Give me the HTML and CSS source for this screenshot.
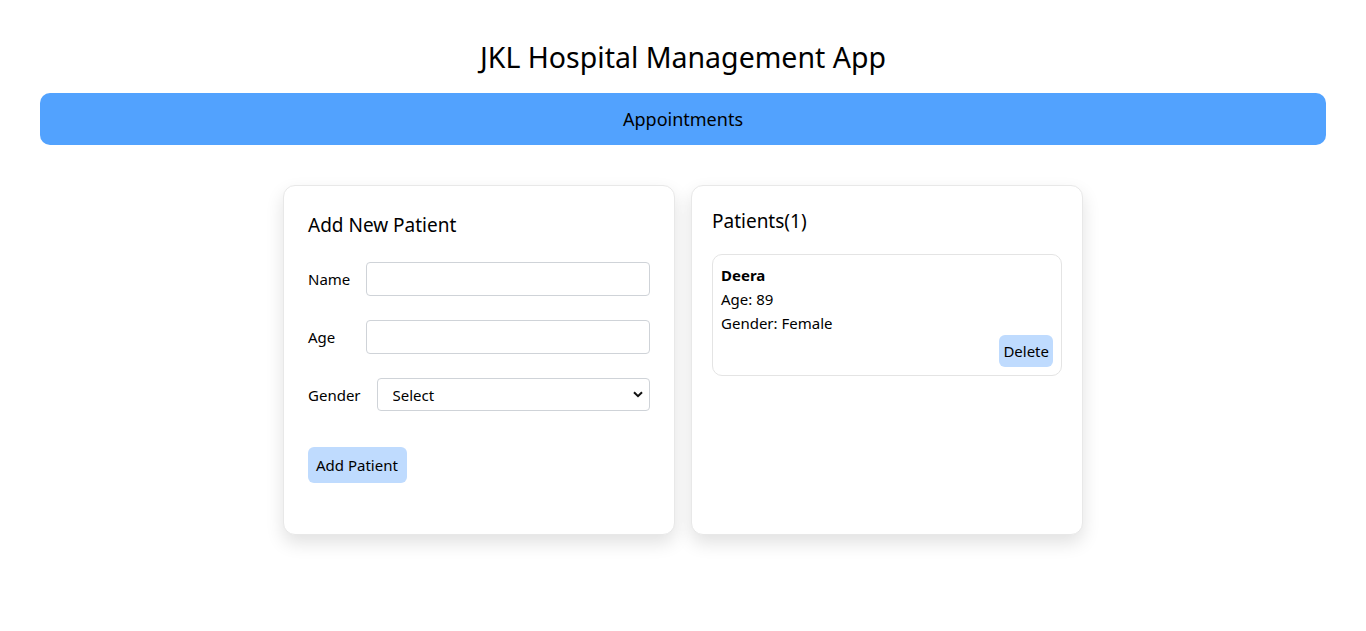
FILE: index.html
```html
<!DOCTYPE html>
<html lang="en">
<head>
<meta charset="utf-8">
<title>JKL Hospital Management App</title>
<link rel="stylesheet" href="styles.css">
</head>
<body>
<div class="app">
  <h1 class="title">JKL Hospital Management App</h1>
  <nav class="nav">Appointments</nav>
  <main class="panels">
    <section class="card card-form">
      <h2 class="card-title">Add New Patient</h2>
      <form class="form">
        <div class="row">
          <label class="lbl">Name</label>
          <input class="field" type="text">
        </div>
        <div class="row">
          <label class="lbl">Age</label>
          <input class="field" type="text">
        </div>
        <div class="row">
          <label class="lbl lbl-wide">Gender</label>
          <div class="select-wrap">
            <select class="field select">
              <option>Select</option>
              <option>Male</option>
              <option>Female</option>
            </select>
            <svg class="chev" width="10" height="7" viewBox="0 0 10 7"><path d="M1 1.2 L5 5.2 L9 1.2" fill="none" stroke="#111" stroke-width="2"/></svg>
          </div>
        </div>
        <button type="button" class="btn btn-add">Add Patient</button>
      </form>
    </section>
    <section class="card card-list">
      <h2 class="card-title list-title">Patients(1)</h2>
      <div class="patient">
        <div class="p-name">Deera</div>
        <div class="p-line">Age: 89</div>
        <div class="p-line">Gender: Female</div>
        <div class="p-actions">
          <button type="button" class="btn btn-del">Delete</button>
        </div>
      </div>
    </section>
  </main>
</div>
</body>
</html>
```
FILE: styles.css
```css
* { box-sizing: border-box; }
html, body { min-height: 100%; }
body {
  margin: 0;
  min-height: 100vh;
  font-family: "Noto Sans", "Open Sans", sans-serif;
  color: #000;
  background: #fff;
}
.app { padding: 0 40px 60px; }
.title {
  margin: 37px 0 16px;
  font-size: 28.5px;
  line-height: 40px;
  font-weight: 400;
  text-align: center;
}
.nav {
  height: 52px;
  line-height: 52px;
  background: #52a2fe;
  border-radius: 10px;
  text-align: center;
  font-size: 18px;
}
.panels {
  display: flex;
  justify-content: center;
  gap: 16px;
  margin-top: 40px;
}
.card {
  width: 392px;
  border: 1px solid #e8e8e8;
  border-radius: 12px;
  box-shadow: 0 8px 18px rgba(0,0,0,0.12);
  background: #fff;
}
.card-form { padding: 25px 24px 24px 24px; }
.card-list { padding: 21px 20px 20px 20px; }
.card-title {
  margin: 0;
  font-size: 19px;
  line-height: 28px;
  font-weight: 400;
}
.form { display: flex; flex-direction: column; margin-top: 23px; }
.row {
  display: flex;
  align-items: center;
  margin-bottom: 24px;
}
.lbl {
  flex: 0 0 42px;
  margin-right: 16px;
  font-size: 15px;
  white-space: nowrap;
}
.lbl-wide { flex-basis: 52px; }
.field {
  flex: 1;
  height: 34px;
  border: 1px solid #cfd3d8;
  border-radius: 4px;
  font: inherit;
  font-size: 15px;
  background: #fff;
}
.select-wrap { flex: 1; position: relative; display: flex; }
.select {
  height: 33px;
  padding: 0 0 0 15px;
  appearance: none;
  -webkit-appearance: none;
  color: #000;
}
.chev { position: absolute; right: 7px; top: 13px; pointer-events: none; }
.btn {
  border: none;
  background: #bfdbfe;
  border-radius: 6px;
  font: inherit;
  font-size: 15px;
  color: #000;
  cursor: pointer;
}
.btn-add {
  align-self: flex-start;
  height: 36px;
  padding: 0 9px 0 8px;
  margin-top: 12px;
  margin-bottom: 27px;
}
.list-title { margin-bottom: 19px; }
.patient {
  border: 1px solid #e4e4e4;
  border-radius: 10px;
  padding: 8px;
  font-size: 15px;
  line-height: 24px;
}
.p-name { font-weight: 700; }
.p-actions { display: flex; justify-content: flex-end; }
.btn-del { height: 32px; padding: 0 4px; }
```
